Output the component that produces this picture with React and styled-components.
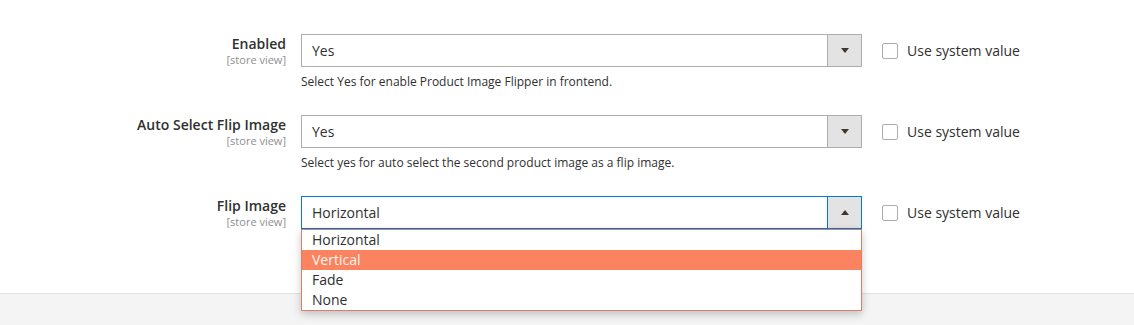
import React from "react";
import styled, { createGlobalStyle } from "styled-components";

const Global = createGlobalStyle`
  html, body {
    margin: 0;
    padding: 0;
    background: #fff;
  }
  body {
    font-family: "Open Sans", "DejaVu Sans", sans-serif;
    color: #303030;
  }
`;

let S = {};
S.Page = styled.div`
  width: 1134px;
  height: 325px;
  display: flex;
  flex-direction: column;
  overflow: hidden;
`;

S.Content = styled.div`
  height: 293px;
  box-sizing: border-box;
  padding-top: 34px;
  display: flex;
  flex-direction: column;
  gap: 25px;
`;

S.Footer = styled.div`
  flex: 1;
  border-top: 1px solid #e3e3e3;
  background: #f4f4f4;
`;

S.Row = styled.div`
  display: grid;
  grid-template-columns: 286px 561px auto;
  column-gap: 15px;
  align-items: start;
`;

S.Label = styled.div`
  padding-top: 1px;
  text-align: right;
  display: flex;
  flex-direction: column;
  align-items: flex-end;
`;

S.LabelText = styled.span`
  font-size: 14px;
  font-weight: 600;
  line-height: 18px;
  color: #303030;
`;

S.Scope = styled.span`
  font-size: 11px;
  line-height: 13px;
  color: #8f8f8f;
`;

S.Control = styled.div`
  position: relative;
`;

S.Select = styled.div`
  height: 33px;
  box-sizing: border-box;
  display: flex;
  border: 1px solid ${(p) => (p.$open ? "#007bdb" : "#adadad")};
  background: #fff;
`;

S.Value = styled.div`
  flex: 1;
  padding-left: 10px;
  font-size: 14px;
  line-height: 31px;
  color: #303030;
`;

S.Addon = styled.div`
  width: 33px;
  margin: -1px -1px -1px 0;
  border: 1px solid ${(p) => (p.$open ? "#007bdb" : "#adadad")};
  background: #e3e3e3;
  display: flex;
  align-items: center;
  justify-content: center;
`;

S.Arrow = styled.span`
  width: 0;
  height: 0;
  border-left: 4px solid transparent;
  border-right: 4px solid transparent;
  ${(p) =>
    p.$up
      ? "border-bottom: 5px solid #41362f;"
      : "border-top: 5px solid #41362f;"}
`;

S.Note = styled.div`
  margin-top: 6px;
  font-size: 12px;
  line-height: 17px;
  color: #303030;
`;

S.Dropdown = styled.ul`
  position: absolute;
  top: 33px;
  left: 0;
  right: 0;
  margin: 0;
  padding: 0;
  list-style: none;
  background: #fff;
  border: 1px solid #d9806a;
  box-shadow: 0 3px 8px rgba(0, 0, 0, 0.22);
  z-index: 2;
`;

S.Option = styled.li`
  height: 20px;
  line-height: 20px;
  padding-left: 10px;
  font-size: 14px;
  color: ${(p) => (p.$active ? "#fff4f0" : "#303030")};
  background: ${(p) => (p.$active ? "#fb8360" : "transparent")};
`;

S.System = styled.label`
  display: flex;
  align-items: center;
  gap: 9px;
  height: 33px;
  margin-left: 5px;
  font-size: 14px;
  color: #303030;
`;

S.Box = styled.span`
  width: 14px;
  height: 14px;
  border: 1px solid #adadad;
  border-radius: 2px;
  background: #fff;
`;

const fields = [
  {
    label: "Enabled",
    value: "Yes",
    note: "Select Yes for enable Product Image Flipper in frontend.",
  },
  {
    label: "Auto Select Flip Image",
    value: "Yes",
    note: "Select yes for auto select the second product image as a flip image.",
  },
  {
    label: "Flip Image",
    value: "Horizontal",
    open: true,
    options: ["Horizontal", "Vertical", "Fade", "None"],
    active: 1,
  },
];

const Field = ({ label, value, note, open, options, active }) => (
  <S.Row>
    <S.Label>
      <S.LabelText>{label}</S.LabelText>
      <S.Scope>[store view]</S.Scope>
    </S.Label>
    <S.Control>
      <S.Select $open={open}>
        <S.Value>{value}</S.Value>
        <S.Addon $open={open}>
          <S.Arrow $up={open} />
        </S.Addon>
      </S.Select>
      {note ? <S.Note>{note}</S.Note> : null}
      {open ? (
        <S.Dropdown>
          {options.map((o, i) => (
            <S.Option key={o} $active={i === active}>
              {o}
            </S.Option>
          ))}
        </S.Dropdown>
      ) : null}
    </S.Control>
    <S.System>
      <S.Box />
      Use system value
    </S.System>
  </S.Row>
);

const App = () => (
  <S.Page>
    <Global />
    <S.Content>
      {fields.map((f) => (
        <Field key={f.label} {...f} />
      ))}
    </S.Content>
    <S.Footer />
  </S.Page>
);

export default App;
